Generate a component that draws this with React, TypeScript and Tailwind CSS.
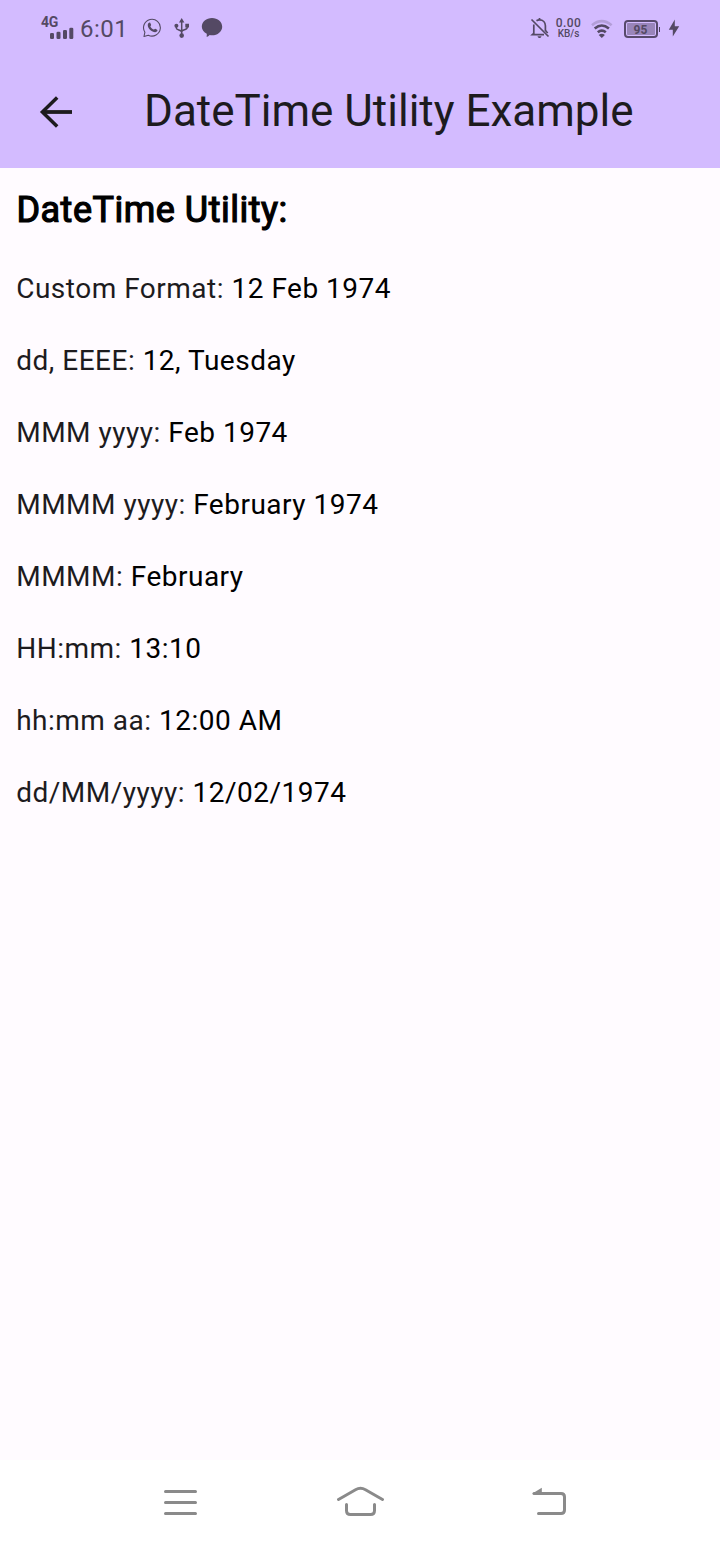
import React from "react";

const rows: [string, string][] = [
  ["Custom Format:", "12 Feb 1974"],
  ["dd, EEEE:", "12, Tuesday"],
  ["MMM yyyy:", "Feb 1974"],
  ["MMMM yyyy:", "February 1974"],
  ["MMMM:", "February"],
  ["HH:mm:", "13:10"],
  ["hh:mm aa:", "12:00 AM"],
  ["dd/MM/yyyy:", "12/02/1974"],
];

function SignalIcon() {
  return (
    <div className="flex h-[24px] w-[33px] flex-col">
      <span className="-ml-px h-[11px] text-[14px] leading-[13px] font-bold tracking-[-0.3px]">4G</span>
      <svg width="33" height="12" viewBox="0 0 33 12" fill="currentColor">
        <rect x="8" y="6" width="4" height="6" rx="1.3" />
        <rect x="14.5" y="4.8" width="4" height="7.2" rx="1.3" />
        <rect x="21" y="3" width="4" height="9" rx="1.3" />
        <rect x="27.3" y="0.8" width="4" height="11.2" rx="1.3" />
      </svg>
    </div>
  );
}

function CallBubbleIcon() {
  return (
    <svg width="20" height="22" viewBox="142 17 20 22" fill="none" stroke="currentColor">
      <path d="M144.900 32.200a8.400 8.400 0 1 1 3.400 3L144 36.500Z" strokeWidth="1.100" strokeLinejoin="round" />
      <path
        d="M148.600 23.100c.5-.6 1.400-.7 1.700-.1l.8 1.800c.2.6-.8 1.200-.7 1.700.6 1.400 1.700 2.500 3.200 3.100.6.1 1.100-1 1.700-.8l1.800.9c.7.4.3 1.400-.3 1.900-1.100 1-2.700.7-4.200-.1-2-1-3.600-2.700-4.500-4.600-.5-1.400-.5-2.800.5-3.800Z"
        fill="currentColor"
        stroke="none"
      />
    </svg>
  );
}

function UsbIcon() {
  return (
    <svg width="16" height="22" viewBox="174 17 16 22" fill="none" stroke="currentColor">
      <path d="M181.700 20V35M176.300 26.500v1.500c0 2.500 5.400 1.500 5.400 4.500M187.200 26v1.500c0 3-5.500 1.500-5.500 4.500" strokeWidth="1.500" />
      <path d="M181.700 18l2.700 4.400h-5.400ZM185.300 23.700h3.700v3.700h-3.700Z" fill="currentColor" stroke="none" />
      <circle cx="176.400" cy="25.800" r="2" fill="currentColor" stroke="none" />
      <circle cx="181.700" cy="35.600" r="2.300" fill="currentColor" stroke="none" />
    </svg>
  );
}

function MessageIcon() {
  return (
    <svg width="22" height="22" viewBox="201 17 22 22" fill="currentColor">
      <path d="M212 18c5.700 0 10.200 3.900 10.200 8.700s-4.500 8.600-10.200 8.600c-.8 0-1.600-.1-2.300-.2-.9.800-2 1.600-3 1.900l.1-3.300c-3-1.500-5-4.100-5-7 0-4.800 4.500-8.700 10.200-8.700Z" />
    </svg>
  );
}

function MutedBellIcon() {
  return (
    <svg width="20" height="22" viewBox="530 17 20 22" fill="none" stroke="currentColor" strokeWidth="1.700">
      <path d="M531.500 19.500L548.500 36.500M536.500 20.700c1-.7 1.900-.9 3-.9 3.500 0 5.900 2.500 5.900 6v5.200M533.800 24.500v8.800L532.300 34.700H544" />
      <path d="M537.500 36.200h4c-.3 1.200-1 1.800-2 1.800s-1.700-.6-2-1.800Z" fill="currentColor" stroke="none" />
      <path d="M539.500 18v2M545.400 30.500l2.300 2.500" />
    </svg>
  );
}

function WifiIcon() {
  return (
    <svg width="22" height="20" viewBox="591 18 22 20" fill="none" stroke="currentColor" strokeWidth="2.600">
      <path d="M592 25.200q9.800-8.200 19.600 0" className="opacity-25" />
      <path d="M594.700 28.500q7.100-6 14.200 0M597.800 32.300q4-3.400 8 0" />
      <path d="M598.700 34.900q3.100-2.300 6.200 0L601.800 38Z" fill="currentColor" stroke="none" />
    </svg>
  );
}

function BatteryIcon() {
  return (
    <div className="flex items-center">
      <div className="flex h-[18px] w-[34px] rounded-[4px] border-2 border-[#57496b] p-px">
        <div className="flex flex-1 items-center justify-center rounded-[1px] bg-[#9985ba] text-[12px] leading-none font-bold">
          <span className="translate-y-[1px]">95</span>
        </div>
      </div>
      <div className="ml-px h-[5px] w-[1.500px] bg-[#4b405d]" />
    </div>
  );
}

function StatusBar() {
  return (
    <div className="flex h-14 items-center pr-10 pl-[42px] text-[#544964]">
      <SignalIcon />
      <span className="ml-[5px] w-[61px] pt-0.5 text-[24px] leading-none tracking-[0.500px]">6:01</span>
      <div className="ml-px"><CallBubbleIcon /></div>
      <div className="ml-3"><UsbIcon /></div>
      <div className="ml-[11px]"><MessageIcon /></div>
      <div className="ml-auto flex items-center">
        <MutedBellIcon />
        <div className="ml-[6px] flex w-[26px] flex-col items-center font-medium whitespace-nowrap">
          <span className="text-[12px] leading-[12px] tracking-[0.400px]">0.00</span>
          <span className="text-[10px] leading-[10px]">KB/s</span>
        </div>
        <div className="ml-[9px]"><WifiIcon /></div>
        <div className="mt-0.5 ml-[11px]"><BatteryIcon /></div>
        <svg className="ml-[8px]" width="12" height="18" viewBox="668 19 12 18" fill="currentColor">
          <path d="M674.800 19.500V26.200H679.200L672.800 36.500V29.700H668.800Z" />
        </svg>
      </div>
    </div>
  );
}

function NavigationBar() {
  return (
    <nav className="flex h-[84px] items-center bg-white pl-[163px] text-[#8a8a8a]">
      <svg width="35" height="32" viewBox="163 1486 35 32" fill="none" stroke="currentColor" strokeWidth="3" strokeLinecap="round">
        <path d="M165.500 1491.500h30M165.500 1502.500h30M165.500 1513.500h30" />
      </svg>
      <svg className="ml-[138px]" width="49" height="32" viewBox="336 1486 49 32" fill="none" stroke="currentColor" strokeWidth="3" strokeLinecap="round">
        <path d="M338.500 1499.500L355.500 1489.700Q360.500 1487 365.500 1489.700L382.500 1499.500M346.500 1504.500v6q0 4 4 4h20q4 0 4-4v-6" />
      </svg>
      <svg className="ml-[146px]" width="37" height="32" viewBox="531 1486 37 32" fill="none" stroke="currentColor" strokeWidth="3" strokeLinecap="round">
        <path d="M534 1493.500h27q3.500 0 3.500 3.500v13q0 3.500-3.500 3.500h-22.500" />
        <path d="M532 1493.800L541.800 1487.800V1494Z" fill="currentColor" stroke="none" />
      </svg>
    </nav>
  );
}

export default function App() {
  return (
    <div className="flex h-[1544px] w-[720px] flex-col bg-[#fffbff] font-['Roboto',sans-serif]">
      <header className="h-[168px] bg-[#d3bbff]">
        <StatusBar />
        <div className="flex h-28 items-center text-[#1d1b1e]">
          <svg className="ml-8" width="48" height="48" viewBox="0 0 24 24" fill="none" stroke="currentColor">
            <path d="M12.600 4.700L5.200 12l7.400 7.300" strokeWidth="1.750" />
            <path d="M5 12H20" strokeWidth="1.900" />
          </svg>
          <h1 className="ml-16 pb-0.5 text-[44px] leading-[56px] font-normal whitespace-nowrap">DateTime Utility Example</h1>
        </div>
      </header>
      <main className="flex-1 px-4 pt-4 text-[28px] leading-10 tracking-[0.500px]">
        <h2 className="mb-[37px] h-12 pl-[0.400px] text-[36px] leading-[52px] font-normal text-black [-webkit-text-stroke:1.200px_#000]">DateTime Utility:</h2>
        <div className="flex flex-col gap-8 pl-[0.200px]">
          {rows.map(([label, value]) => (
            <p key={label} className="text-[#1d1b1e]">
              {label} <span className="text-black">{value}</span>
            </p>
          ))}
        </div>
      </main>
      <NavigationBar />
    </div>
  );
}
